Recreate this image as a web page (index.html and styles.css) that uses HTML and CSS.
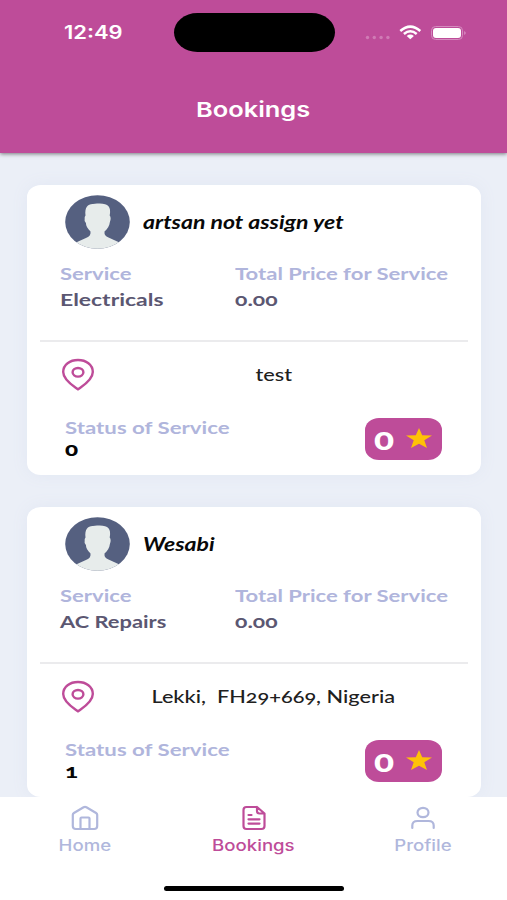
FILE: index.html
```
<!DOCTYPE html>
<html lang="en">
<head>
<meta charset="utf-8">
<title>Bookings</title>
<link rel="stylesheet" href="styles.css">
</head>
<body>
<svg class="defs" aria-hidden="true">
  <symbol id="avatar" viewBox="0 0 65 54" preserveAspectRatio="none">
    <clipPath id="disc"><ellipse cx="32.5" cy="27" rx="32.3" ry="26.8"/></clipPath>
    <g clip-path="url(#disc)">
      <rect width="65" height="54" fill="#556080"/>
      <path d="M11 47.5 L22 42.6 Q26 40.8 25.5 36.5 C22.500 33.500 21 31 20.900 28 Q19 26 19.700 22 L20.500 20.500 C19.500 12 23 8.700 28 8.900 Q31 8.300 34 8.600 C43 8.400 46.500 12 44.700 20.500 Q46.500 23 44.900 27 C44.500 31 42.500 34 39.500 36.500 Q39 41 43.500 42.600 L54.500 47.500 V54 H11Z" fill="#e7eceb"/>
    </g>
  </symbol>
  <symbol id="pin" viewBox="0 0 34 34">
    <path d="M17 31.400 C13.800 28.800 2.200 22.500 2.200 14 C2.200 6.500 9 2 17 2 S31.800 6.500 31.800 14 C31.800 22.500 20.200 28.800 17 31.400Z" fill="none" stroke="#be4c99" stroke-width="2.400" stroke-linejoin="round"/>
    <ellipse cx="17" cy="14.300" rx="5.400" ry="4.300" fill="none" stroke="#be4c99" stroke-width="2.400"/>
  </symbol>
  <symbol id="star" viewBox="0 0 26 21" preserveAspectRatio="none">
    <path d="M13 0 L16.200 7.500 L26 7.900 L18.300 12.800 L21 21 L13 16.500 L5 21 L7.700 12.800 L0 7.900 L9.800 7.500Z" fill="#ffc107"/>
  </symbol>
</svg>

<header class="header">
  <div class="status">
    <span class="time"><span class="wide">12:49</span></span>
    <span class="island"></span>
    <svg class="signals" viewBox="0 0 104 20">
      <g fill="#d07bb5"><circle cx="3.500" cy="14.500" r="1.700"/><circle cx="10.300" cy="14.500" r="1.700"/><circle cx="17.100" cy="14.500" r="1.700"/><circle cx="23.900" cy="14.500" r="1.700"/></g>
      <g fill="none" stroke="#fff" stroke-width="2.500">
        <path d="M36.300 8 Q46.300 -.8 56.300 8"/>
        <path d="M39.900 11 Q46.300 5.600 52.700 11"/>
      </g>
      <path d="M42.700 13 Q46.300 10.200 49.900 13 L46.300 16.200Z" fill="#fff"/>
      <rect x="67.500" y="3.500" width="31" height="13" rx="4" fill="none" stroke="#d58abf"/>
      <rect x="69" y="5" width="28" height="10" rx="3" fill="#fff"/>
      <path d="M100.300 8 Q103 10 100.300 12Z" fill="#dd9bca"/>
    </svg>
  </div>
  <h1 class="title"><span class="wide">Bookings</span></h1>
</header>

<main class="list">
  <article class="card">
    <div class="person"><svg class="avatar"><use href="#avatar"/></svg><span class="name"><span class="wide">artsan not assign yet</span></span></div>
    <div class="facts">
      <div><div class="label"><span class="wide">Service</span></div><div class="value"><span class="wide">Electricals</span></div></div>
      <div><div class="label"><span class="wide">Total Price for Service</span></div><div class="value"><span class="wide">0.00</span></div></div>
    </div>
    <div class="place"><svg class="pin"><use href="#pin"/></svg><div class="address"><span class="wide">test</span></div></div>
    <div class="foot">
      <div><div class="label"><span class="wide">Status of Service</span></div><div class="state"><span class="wide">0</span></div></div>
      <div class="rating"><span class="score"><span class="wide">0</span></span><svg class="star"><use href="#star"/></svg></div>
    </div>
  </article>
  <article class="card">
    <div class="person"><svg class="avatar"><use href="#avatar"/></svg><span class="name"><span class="wide">Wesabi</span></span></div>
    <div class="facts">
      <div><div class="label"><span class="wide">Service</span></div><div class="value repairs"><span class="wide">AC Repairs</span></div></div>
      <div><div class="label"><span class="wide">Total Price for Service</span></div><div class="value"><span class="wide">0.00</span></div></div>
    </div>
    <div class="place"><svg class="pin"><use href="#pin"/></svg><div class="address"><span class="wide">Lekki,&nbsp; FH29+669, Nigeria</span></div></div>
    <div class="foot">
      <div><div class="label"><span class="wide">Status of Service</span></div><div class="state"><span class="wide">1</span></div></div>
      <div class="rating"><span class="score"><span class="wide">0</span></span><svg class="star"><use href="#star"/></svg></div>
    </div>
  </article>
</main>

<nav class="tabs">
  <div class="items">
    <a class="tab"><svg class="icon" viewBox="0 0 30 26"><path d="M2.800 9.800 Q2.800 8.700 3.900 8 L13.600 2.200 Q15 1.400 16.400 2.200 L26.100 8 Q27.200 8.700 27.200 9.800 V21 Q27.200 24 24.200 24 H5.800 Q2.800 24 2.800 21Z M10.500 24 V13.500 Q10.500 12.500 11.500 12.500 H18.500 Q19.500 12.500 19.500 13.500 V24"/></svg><span class="wide">Home</span></a>
    <a class="tab active"><svg class="icon" viewBox="0 0 30 26"><path d="M18 2 H7.500 Q4.500 2 4.500 5 V21 Q4.500 24 7.500 24 H22.500 Q25.500 24 25.500 21 V8.500 L18 2 V6 Q18 8.500 20.500 8.500 H25.500 M9.500 10 H12.500 M9.500 14.300 H20.500 M9.500 18.600 H20.500"/></svg><span class="wide">Bookings</span></a>
    <a class="tab"><svg class="icon" viewBox="0 0 30 26"><ellipse cx="15" cy="7.500" rx="5.500" ry="4.700"/><path d="M4.300 23 V20.500 Q4.300 16 9.500 16 H20.500 Q25.700 16 25.700 20.500 V23"/></svg><span class="wide">Profile</span></a>
  </div>
  <div class="home-bar"></div>
</nav>
</body>
</html>
```
FILE: styles.css
```
* { box-sizing: border-box; }
body {
  margin: 0;
  height: 900px;
  display: flex;
  flex-direction: column;
  overflow: hidden;
  background: #ebeff7;
  font-family: Lato, "Open Sans", sans-serif;
  font-variant-numeric: oldstyle-nums;
  white-space: nowrap;
}
.defs { position: absolute; width: 0; height: 0; }
.wide { display: inline-block; transform: scaleX(1.27); transform-origin: left center; }

.header {
  height: 153px;
  flex: none;
  background: #be4c99;
  color: #fff;
  box-shadow: 0 1px 4px rgba(0, 0, 0, .5);
  z-index: 1;
}
.status {
  display: grid;
  grid-template-columns: 109.5px 161px 104px;
  align-items: center;
  padding: 12px 0 0 64px;
}
.time { font: 600 18px/40px Inter, sans-serif; font-variant-numeric: lining-nums; padding-top: 1px; }
.time .wide { transform: scaleX(1.22); }
.island { height: 39px; border-radius: 24px / 20px; background: #000; }
.signals { width: 104px; height: 20px; margin-left: 29px; }
.title { margin: 37px 0 0; text-align: center; font: 600 20.500px/40px Inter, sans-serif; }
.title .wide, .tab .wide, .address .wide { transform-origin: center; }
.title .wide { transform: scaleX(1.24); }
.tab .wide { transform: scaleX(1.2); }
.address .wide { transform: scaleX(1.24); }

.list { flex: 1; min-height: 0; padding: 32px 26px 0 27px; display: flex; flex-direction: column; gap: 32px; }
.card { height: 290px; flex: none; border-radius: 14px / 12px; background: #fff; box-shadow: 0 0 16px #e2e7f3; padding: 10px 13px 0; }
.person { display: flex; align-items: center; gap: 13px; padding-left: 25px; height: 54px; }
.avatar { width: 65px; height: 54px; }
.name { color: #090909; font-size: 18px; font-weight: 700; font-style: italic; }
.name .wide { transform: scaleX(1.28); }
.facts { display: grid; grid-template-columns: 175px 1fr; height: 93px; padding: 12px 0 0 20px; border-bottom: 2px solid #ebebed; }
.label { color: #b0b5dc; font-size: 17.500px; font-weight: 700; line-height: 26px; }
.facts .label .wide { transform: scaleX(1.26); }
.value { color: #5b5772; font-size: 17.500px; font-weight: 700; line-height: 26px; }
.value .wide { transform: scaleX(1.31); }
.repairs .wide { transform: scaleX(1.25); }
.place { display: flex; align-items: center; height: 66px; padding: 0 21px; }
.pin { width: 34px; height: 34px; }
.address { flex: 1; text-align: center; padding: 0 0 2px 5px; color: #202020; font-size: 17.500px; font-weight: 500; }
.foot { display: flex; justify-content: space-between; padding: 7px 26px 0 25px; }
.state { color: #050505; font-size: 18px; font-weight: 900; line-height: 20px; margin-top: -2px; }
.state .wide { transform: scaleX(1.35); }
.rating { display: flex; align-items: center; justify-content: space-between; width: 77px; height: 42px; margin-top: 3px; padding: 0 10px 0 9px; border-radius: 14px / 12px; background: #be4c99; color: #fff; }
.score { font-size: 31px; font-weight: 900; line-height: 40px; padding-bottom: 3px; }
.score .wide { transform: scaleX(1.2); }
.star { width: 26px; height: 20px; margin-bottom: 2px; }

.tabs { height: 103px; flex: none; background: #fff; z-index: 1; }
.items { display: grid; grid-template-columns: repeat(3, 1fr); height: 89px; padding-top: 8px; }
.tab { display: flex; flex-direction: column; align-items: center; color: #b0b7dc; font: 500 15.500px/30px Inter, sans-serif; }
.icon { width: 30px; height: 26px; flex: none; fill: none; stroke: currentColor; stroke-width: 2.200; stroke-linecap: round; stroke-linejoin: round; }
.active { color: #be4c99; }
.home-bar { width: 180px; height: 5px; margin: 0 auto; border-radius: 3px; background: #000; }
```
